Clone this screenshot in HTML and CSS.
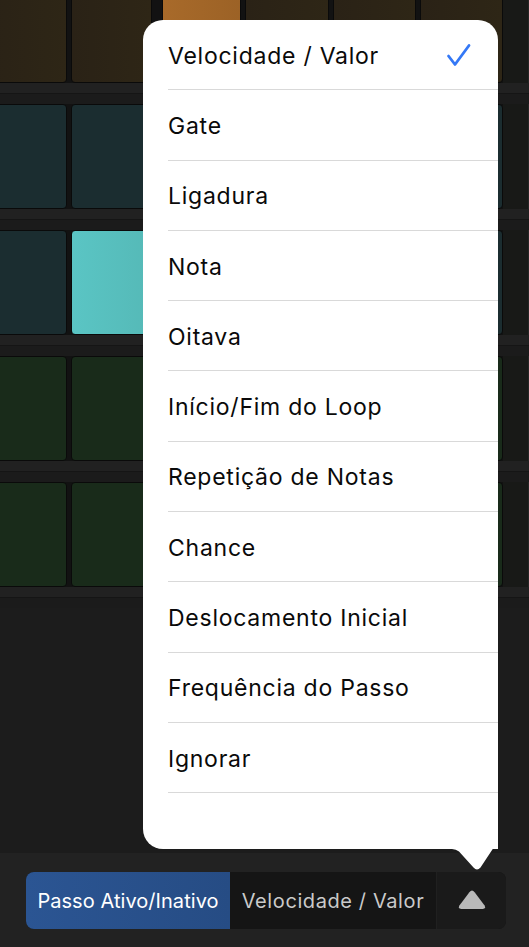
FILE: index.html
```html
<!DOCTYPE html>
<html lang="pt">
<head>
<meta charset="utf-8">
<title>Step Sequencer</title>
<link rel="stylesheet" href="styles.css">
</head>
<body>
<div class="screen">
  <div class="canvas">
    <div class="grid">
      <div class="row row-first brown">
        <div class="pad w1"></div><div class="pad w2"></div><div class="pad w3 on-orange"></div><div class="pad w4"></div><div class="pad w5"></div><div class="pad w6"></div><div class="rest"></div>
      </div>
      <div class="sep"></div>
      <div class="row teal">
        <div class="pad w1"></div><div class="pad w2"></div><div class="pad w3"></div><div class="pad w4"></div><div class="pad w5"></div><div class="pad w6"></div><div class="rest"></div>
      </div>
      <div class="sep"></div>
      <div class="row teal">
        <div class="pad w1"></div><div class="pad w2 on-teal"></div><div class="pad w3"></div><div class="pad w4"></div><div class="pad w5"></div><div class="pad w6"></div><div class="rest"></div>
      </div>
      <div class="sep"></div>
      <div class="row green">
        <div class="pad w1"></div><div class="pad w2"></div><div class="pad w3"></div><div class="pad w4"></div><div class="pad w5"></div><div class="pad w6"></div><div class="rest"></div>
      </div>
      <div class="sep"></div>
      <div class="row green">
        <div class="pad w1"></div><div class="pad w2"></div><div class="pad w3"></div><div class="pad w4"></div><div class="pad w5"></div><div class="pad w6"></div><div class="rest"></div>
      </div>
      <div class="sep"></div>
    </div>
  </div>
  <div class="toolbar">
    <div class="seg">
      <div class="seg-item seg-active">Passo Ativo/Inativo</div>
      <div class="seg-item seg-mid">Velocidade / Valor</div>
      <div class="seg-item seg-more">
        <svg class="tri" width="28" height="19" viewBox="0 0 28 19"><path d="M11.4 2.2 Q14 -1 16.6 2.2 L26.6 15.6 Q28.2 19 24.6 19 H3.4 Q-0.2 19 1.4 15.6 Z" fill="#b9b9b9"/></svg>
      </div>
    </div>
  </div>
  <div class="popover">
    <ul class="menu">
      <li class="item"><span>Velocidade / Valor</span>
        <svg class="check" width="25" height="24" viewBox="0 0 25 24"><path d="M2.5 13 L9 21.5 L23 2.5" fill="none" stroke="#3478f6" stroke-width="2.8" stroke-linecap="round" stroke-linejoin="round"/></svg>
      </li>
      <li class="item"><span>Gate</span></li>
      <li class="item"><span>Ligadura</span></li>
      <li class="item"><span>Nota</span></li>
      <li class="item"><span>Oitava</span></li>
      <li class="item"><span>Início/Fim do Loop</span></li>
      <li class="item"><span>Repetição de Notas</span></li>
      <li class="item"><span>Chance</span></li>
      <li class="item"><span>Deslocamento Inicial</span></li>
      <li class="item"><span>Frequência do Passo</span></li>
      <li class="item"><span>Ignorar</span></li>
    </ul>
    <svg class="arrow" width="53" height="34" viewBox="0 0 53 34"><path d="M0 0 H53 V2 L35.5 28.5 Q32 32.5 28.5 28.5 L14 12.5 Q11 10 7 10 H0 Z" fill="#ffffff"/></svg>
  </div>
</div>
</body>
</html>
```

FILE: styles.css
```css
* { box-sizing: border-box; }
html, body { margin: 0; padding: 0; background: #1c1c1c; }
body { font-family: "Inter", "Helvetica Neue", "Liberation Sans", sans-serif; }

.screen {
  position: relative;
  width: 529px;
  height: 947px;
  overflow: hidden;
  display: flex;
  flex-direction: column;
}

.canvas {
  height: 853px;
  background: #1c1c1c;
  overflow: hidden;
}

.grid {
  display: flex;
  flex-direction: column;
  margin-top: -22px;
}

.row {
  display: flex;
  height: 105px;
  margin-left: -16px;
  gap: 4px;
  background: #121212;
}

.sep {
  height: 21px;
  background: linear-gradient(to bottom, #212121 0, #212121 10px, #151515 10px, #151515 11px, #1b1b1b 11px, #1b1b1b 100%);
}

.pad {
  flex: none;
  height: 100%;
  border: 1.5px solid #0a0a0a;
  border-radius: 4px;
}
.w1 { width: 83px; }
.w2 { width: 81px; }
.w3 { width: 79px; margin-left: 6px; }
.w4 { width: 84px; }
.w5 { width: 83px; }
.w6 { width: 83px; }

.rest {
  flex: 1;
  background: #181917;
  margin-left: -4px;
  border-right: 1px solid #262626;
}

.brown .pad { background: linear-gradient(to right, #2a2216, #2e2616); }
.teal .pad { background: #1b2d30; }
.green .pad { background: #192b1a; }
.brown .on-orange { background: linear-gradient(to right, #a86a2a, #9c6226); }
.teal .on-teal { background: linear-gradient(to right, #5ac5c4, #55b9b7); }

.toolbar {
  flex: 1;
  background: #222222;
  padding: 19px 0 0 26px;
}

.seg {
  display: flex;
  width: 480px;
  height: 57px;
  border-radius: 8px;
  overflow: hidden;
  background: #161616;
}

.seg-item {
  display: flex;
  align-items: center;
  justify-content: center;
  font-size: 20px;
  white-space: nowrap;
}
.seg-active {
  width: 204px;
  background: linear-gradient(to right, #2b5593, #264c84);
  color: #ffffff;
  letter-spacing: 0.05px;
}
.seg-mid {
  width: 206px;
  background: #151515;
  color: #cacaca;
  letter-spacing: 0.6px;
}
.seg-more {
  flex: 1;
  background: #1a1a1a;
  border-left: 1px solid #202020;
}
.tri { display: block; margin-top: -2px; }

.popover {
  position: absolute;
  left: 143px;
  top: 20px;
  width: 355px;
  height: 829px;
  background: #ffffff;
  border-radius: 20px 20px 0 20px;
}

.menu {
  list-style: none;
  margin: 0;
  padding: 0;
}

.item {
  display: flex;
  align-items: center;
  justify-content: space-between;
  height: 70.3px;
  margin-left: 25px;
  padding-right: 27px;
  padding-top: 2px;
  border-bottom: 1px solid #d9d9d9;
  font-size: 23px;
  color: #0a0a0a;
  letter-spacing: 0.75px;
}

.check { display: block; margin-top: -2px; }

.arrow {
  position: absolute;
  left: 302px;
  top: 819px;
  display: block;
}
```
